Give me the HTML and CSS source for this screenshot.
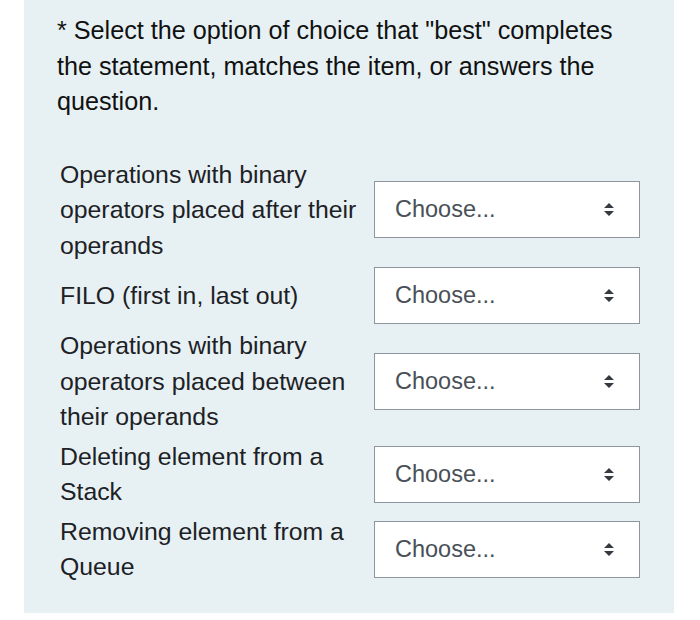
FILE: index.html
```html
<!DOCTYPE html>
<html>
<head>
<meta charset="utf-8">
<link rel="stylesheet" href="styles.css">
</head>
<body>
<div class="panel">
  <p class="prompt">* Select the option of choice that "best" completes the statement, matches the item, or answers the question.</p>
  <div class="rows">
    <div class="row">
      <div class="label">Operations with binary operators placed after their operands</div>
      <div class="select"><span>Choose...</span><svg class="arrows" width="10" height="13" viewBox="0 0 10 13"><path d="M5 0 L10 5 L0 5 Z M5 13 L10 8 L0 8 Z" fill="#343a40"/></svg></div>
    </div>
    <div class="row">
      <div class="label">FILO (first in, last out)</div>
      <div class="select"><span>Choose...</span><svg class="arrows" width="10" height="13" viewBox="0 0 10 13"><path d="M5 0 L10 5 L0 5 Z M5 13 L10 8 L0 8 Z" fill="#343a40"/></svg></div>
    </div>
    <div class="row">
      <div class="label">Operations with binary operators placed between their operands</div>
      <div class="select"><span>Choose...</span><svg class="arrows" width="10" height="13" viewBox="0 0 10 13"><path d="M5 0 L10 5 L0 5 Z M5 13 L10 8 L0 8 Z" fill="#343a40"/></svg></div>
    </div>
    <div class="row">
      <div class="label">Deleting element from a Stack</div>
      <div class="select"><span>Choose...</span><svg class="arrows" width="10" height="13" viewBox="0 0 10 13"><path d="M5 0 L10 5 L0 5 Z M5 13 L10 8 L0 8 Z" fill="#343a40"/></svg></div>
    </div>
    <div class="row">
      <div class="label">Removing element from a Queue</div>
      <div class="select"><span>Choose...</span><svg class="arrows" width="10" height="13" viewBox="0 0 10 13"><path d="M5 0 L10 5 L0 5 Z M5 13 L10 8 L0 8 Z" fill="#343a40"/></svg></div>
    </div>
  </div>
</div>
</body>
</html>
```
FILE: styles.css
```css
html, body {
  margin: 0;
  padding: 0;
  background: #ffffff;
}
body {
  padding: 0 26px 0 24px;
  font-family: "Liberation Sans", Arial, sans-serif;
  color: #1d2125;
}
.panel {
  background: #e7f1f4;
  padding: 13px 34px 28px 36px;
}
.prompt {
  margin: 0 0 37px -3px;
  font-size: 25.2px;
  line-height: 35.5px;
  color: #111;
}
.rows {
  display: flex;
  flex-direction: column;
  gap: 4px;
}
.row {
  display: flex;
  align-items: center;
  gap: 14px;
}
.label {
  width: 300px;
  font-size: 24.8px;
  line-height: 35.5px;
}
.select {
  background: #fff;
  border: 1px solid #8f959e;
  display: flex;
  align-items: center;
  justify-content: space-between;
  padding: 0 25px 0 20px;
  box-sizing: border-box;
  width: 266px;
  height: 57px;
  font-size: 23.5px;
  color: #495057;
}
.arrows {
  display: block;
}
```
